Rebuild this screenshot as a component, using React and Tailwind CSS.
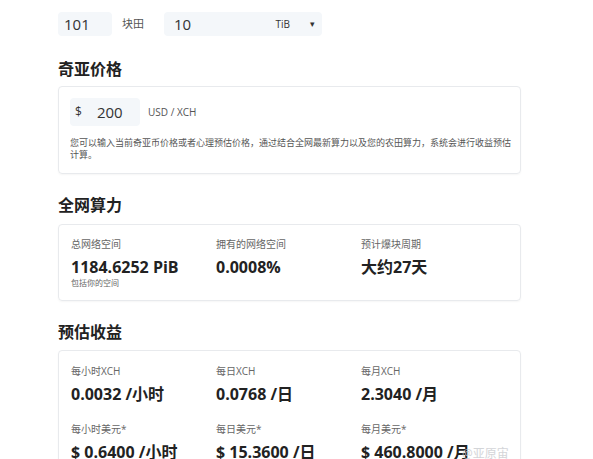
import React from "react";

const font = { fontFamily: "'Open Sans', 'Noto Sans CJK SC', sans-serif" };

const Heading = ({ children, className = "" }) => (
  <h2 className={`h-[24px] text-[16px] leading-[24px] font-bold text-[#222] ${className}`}>
    {children}
  </h2>
);

const Stat = ({ label, value, note }) => (
  <div className="w-[145px]">
    <p className="text-[10px] leading-[14px] text-[#666]">{label}</p>
    <p className="mt-[6px] text-[16px] leading-[20px] font-bold text-[#222]">{value}</p>
    {note && <p className="text-[8px] leading-[11px] text-[#666]">{note}</p>}
  </div>
);

const network = [
  { label: "总网络空间", value: "1184.6252 PiB", note: "包括你的空间" },
  { label: "拥有的网络空间", value: "0.0008%" },
  { label: "预计爆块周期", value: "大约27天" },
];

const earnings = [
  { label: "每小时XCH", value: "0.0032 /小时" },
  { label: "每日XCH", value: "0.0768 /日" },
  { label: "每月XCH", value: "2.3040 /月" },
  { label: "每小时美元*", value: "$ 0.6400 /小时" },
  { label: "每日美元*", value: "$ 15.3600 /日" },
  { label: "每月美元*", value: "$ 460.8000 /月" },
];

export default function App() {
  return (
    <div style={font} className="relative h-[459px] overflow-hidden bg-white pl-[58px] pt-[12px]">
      {/* plot inputs */}
      <div className="flex h-[24px] items-center">
        <div className="flex h-full w-[54px] items-center rounded bg-[#f4f7fa] pl-[6px] text-[15px] text-[#333]">
          101
        </div>
        <span className="ml-[10px] text-[11px] text-[#555]">块田</span>
        <div className="ml-[20px] flex h-full w-[158px] items-center rounded bg-[#f4f7fa] pl-[10px] pr-[6px] text-[15px] text-[#333]">
          <span>10</span>
          <span className="ml-auto text-[10px]">TiB</span>
          <span className="ml-[20px] mr-[1px] text-[9px]">▾</span>
        </div>
      </div>

      <Heading className="mt-[21px]">奇亚价格</Heading>
      <div className="mt-[5px] h-[88px] w-[463px] rounded border border-[#e8eaed] px-[11px] pt-[11px] shadow-[0_1px_2px_rgba(0,0,0,0.04)]">
        <div className="flex items-center">
          <div className="flex h-[28px] w-[70px] items-center rounded bg-[#f4f7fa] pl-[5px] text-[#333]">
            <span className="text-[12px]">$</span>
            <span className="ml-[15px] text-[15px]">200</span>
          </div>
          <span className="ml-[8px] text-[10px] text-[#555]">USD / XCH</span>
        </div>
        <p className="mt-[11px] w-[446px] text-[9px] leading-[12px] text-[#555]">
          您可以输入当前奇亚币价格或者心理预估价格，通过结合全网最新算力以及您的农田算力，系统会进行收益预估计算。
        </p>
      </div>

      <Heading className="mt-[19px]">全网算力</Heading>
      <div className="mt-[7px] flex h-[77px] w-[463px] rounded border border-[#e8eaed] pl-[12px] pt-[12px] shadow-[0_1px_2px_rgba(0,0,0,0.04)]">
        {network.map((s) => (
          <Stat key={s.label} {...s} />
        ))}
      </div>

      <Heading className="mt-[19px]">预估收益</Heading>
      <div className="mt-[6px] grid w-[463px] grid-cols-[145px_145px_145px] gap-y-[18px] rounded border border-[#e8eaed] pb-[20px] pl-[12px] pt-[13px] shadow-[0_1px_2px_rgba(0,0,0,0.04)]">
        {earnings.map((s) => (
          <Stat key={s.label} {...s} />
        ))}
      </div>

      <span className="absolute left-[462px] top-[446px] text-[12px] leading-[16px] text-[#c9cbcf] opacity-80">@亚原宙</span>
    </div>
  );
}
